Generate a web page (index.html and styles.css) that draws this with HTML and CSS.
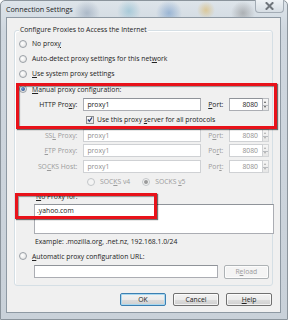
FILE: index.html
```html
<!DOCTYPE html>
<html lang="en">
  <head>
    <meta charset="UTF-8" />
    <title>Connection Settings</title>
    <link rel="stylesheet" href="styles.css">
  </head>
  <body>
    <div class="window">
      <!-- TITLE BAR -->
      <div class="titlebar">
        <span class="title">Connection Settings</span>
        <span class="close-btn">
          <svg width="9" height="8" viewBox="0 0 9 8">
            <path d="M1.5 1 L7.5 7 M7.5 1 L1.5 7" stroke="#6f757b" stroke-width="2" stroke-linecap="square"/>
          </svg>
        </span>
      </div>

      <!-- CLIENT AREA -->
      <div class="client">
        <div class="group">
          <div class="group-title">Configure Proxies to Access the Internet</div>

          <div class="row opt first"><span class="radio"></span><span>No prox<u>y</u></span></div>
          <div class="row opt"><span class="radio"></span><span>Auto-detect proxy settings for this net<u>w</u>ork</span></div>
          <div class="row opt"><span class="radio"></span><span><u>U</u>se system proxy settings</span></div>
          <div class="row opt tall"><span class="radio on"></span><span><u>M</u>anual proxy configuration:</span></div>

          <div class="row proxy">
            <span class="lbl">HTTP Pro<u>x</u>y:</span>
            <span class="field">proxy1</span>
            <span class="port-lbl"><u>P</u>ort:</span>
            <span class="port"><span class="num">8080</span><span class="spin"></span></span>
          </div>
          <div class="row check-row">
            <span class="check">
              <svg width="7" height="7" viewBox="0 0 7 7"><path d="M1 3.5 L2.8 5.5 L6 1" fill="none" stroke="#33457a" stroke-width="1.4"/></svg>
            </span>
            <span>Use this proxy <u>s</u>erver for all protocols</span>
          </div>
          <div class="row proxy off tall">
            <span class="lbl">SS<u>L</u> Proxy:</span>
            <span class="field">proxy1</span>
            <span class="port-lbl">P<u>o</u>rt:</span>
            <span class="port"><span class="num">8080</span><span class="spin"></span></span>
          </div>
          <div class="row proxy off">
            <span class="lbl"><u>F</u>TP Proxy:</span>
            <span class="field">proxy1</span>
            <span class="port-lbl">Po<u>r</u>t:</span>
            <span class="port"><span class="num">8080</span><span class="spin"></span></span>
          </div>
          <div class="row proxy off tall">
            <span class="lbl">SO<u>C</u>KS Host:</span>
            <span class="field">proxy1</span>
            <span class="port-lbl">Por<u>t</u>:</span>
            <span class="port"><span class="num">8080</span><span class="spin"></span></span>
          </div>
          <div class="row socks off">
            <span class="radio"></span><span>SOC<u>K</u>S v4</span>
            <span class="radio on v5"></span><span>SOCKS <u>v</u>5</span>
          </div>

          <div class="row noproxy-lbl"><span><u>N</u>o Proxy for:</span></div>
          <div class="area">.yahoo.com</div>
          <div class="row example">Example: .mozilla.org, .net.nz, 192.168.1.0/24</div>
          <div class="row opt tall"><span class="radio"></span><span><u>A</u>utomatic proxy configuration URL:</span></div>
          <div class="row url-row">
            <span class="url-field"></span>
            <span class="btn disabled"><span>R<u>e</u>load</span></span>
          </div>
        </div>

        <div class="buttons">
          <span class="btn default">OK</span>
          <span class="btn">Cancel</span>
          <span class="btn"><span><u>H</u>elp</span></span>
        </div>
      </div>

      <!-- red highlight marks drawn over the dialog -->
      <div class="mark mark-manual"></div>
      <div class="mark mark-noproxy"></div>
    </div>
  </body>
</html>
```

FILE: styles.css
```css
/* RESET */
* {
  margin: 0;
  padding: 0;
  box-sizing: border-box;
}

body {
  background: #ffffff;
  font-family: "Open Sans", "Noto Sans", sans-serif;
  font-size: 6.8px;
  color: #222222;
}

/* WINDOW FRAME (Aero glass look) */
.window {
  position: relative;
  width: 288px;
  height: 320px;
  padding: 0 6px 7px 5px;
  border: 1px solid #8b949c;
  border-radius: 5px 5px 0 0;
  background:
    radial-gradient(circle at 86px 12px, rgba(120, 140, 165, 0.45) 0, rgba(120, 140, 165, 0) 13px),
    radial-gradient(circle at 128px 10px, rgba(110, 175, 200, 0.45) 0, rgba(110, 175, 200, 0) 12px),
    radial-gradient(circle at 168px 12px, rgba(80, 130, 190, 0.45) 0, rgba(80, 130, 190, 0) 13px),
    radial-gradient(circle at 205px 9px, rgba(220, 180, 90, 0.55) 0, rgba(220, 180, 90, 0) 9px),
    radial-gradient(circle at 242px 12px, rgba(120, 120, 120, 0.45) 0, rgba(120, 120, 120, 0) 12px),
    linear-gradient(#dde4ea, #cfd7df 30px, #c9d1d9);
}

.titlebar {
  position: relative;
  height: 16px;
  display: flex;
  align-items: center;
}
.title {
  font-size: 7.2px;
  color: #1b1b1b;
  margin-top: -1px;
}
.close-btn {
  position: absolute;
  top: -1px;
  right: -3px;
  width: 29px;
  height: 13px;
  border: 1px solid #a3acb5;
  border-top: none;
  border-radius: 0 0 4px 4px;
  background: linear-gradient(#eef2f5, #d6dde3);
  display: flex;
  align-items: center;
  justify-content: center;
}

/* CLIENT AREA */
.client {
  height: 296px;
  background: #f0f0f0;
  border: 1px solid #8e99a3;
  padding: 8px 7px 0 7px;
}

/* GROUP BOX */
.group {
  margin-top: 4px;
  height: 256px;
  border: 1px solid #d5dfe5;
  border-radius: 3px;
  box-shadow: inset 1px 1px 0 #fff;
  padding: 0 3px 0 3px;
}
.group-title {
  display: table;
  margin: -6px 0 0 1px;
  padding: 0 1px;
  height: 10px;
  line-height: 10px;
  background: #f0f0f0;
}

/* ROWS */
.row {
  display: flex;
  align-items: center;
  height: 15px;
  white-space: nowrap;
}
.row.tall {
  height: 16px;
}
.row.first {
  margin-top: 1px;
}
.opt {
  padding-left: 1px;
}
.off {
  color: #9b9b9b;
}

/* RADIO & CHECKBOX */
.radio {
  width: 8px;
  height: 8px;
  border-radius: 50%;
  border: 1px solid #9aa0a6;
  background: radial-gradient(circle at 40% 40%, #ffffff, #dcdcdc);
  margin-right: 5px;
  flex: none;
  position: relative;
}
.radio.on::after {
  content: "";
  position: absolute;
  left: 1px;
  top: 1px;
  width: 4px;
  height: 4px;
  border-radius: 50%;
  background: radial-gradient(circle at 35% 35%, #6f9ad6, #1d3f7a);
}
.off .radio {
  border-color: #c3c6c9;
  background: #f4f4f4;
}
.off .radio.on::after {
  background: #9a9a9a;
}
.check {
  width: 8px;
  height: 8px;
  border: 1px solid #8e8f8f;
  background: linear-gradient(#fdfdfd, #e2e2e2);
  margin: 0 3px 0 68px;
  display: flex;
  align-items: center;
  justify-content: center;
  flex: none;
}

/* PROXY ROWS */
.lbl {
  width: 60px;
  text-align: right;
  margin-right: 6px;
}
.field {
  width: 119px;
  height: 13px;
  line-height: 12px;
  border: 1px solid #abadb3;
  border-top-color: #8f9399;
  background: #fff;
  padding-left: 3px;
}
.port-lbl {
  width: 21px;
  margin-left: 7px;
}
.port {
  display: flex;
  height: 13px;
}
.port .num {
  width: 34px;
  height: 13px;
  line-height: 12px;
  border: 1px solid #abadb3;
  border-top-color: #8f9399;
  background: #fff;
  text-align: right;
  padding-right: 4px;
}
.spin {
  width: 6px;
  height: 13px;
  border: 1px solid #b9bcc0;
  border-left: none;
  background:
    linear-gradient(#b9bcc0, #b9bcc0) 0 6px / 100% 1px no-repeat,
    linear-gradient(#f6f6f6, #e6e6e6);
  position: relative;
}
.spin::before,
.spin::after {
  content: "";
  position: absolute;
  left: 1px;
  border-left: 1.5px solid transparent;
  border-right: 1.5px solid transparent;
}
.spin::before {
  top: 2px;
  border-bottom: 2px solid #555;
}
.spin::after {
  bottom: 2px;
  border-top: 2px solid #555;
}
.off .field,
.off .num {
  border-color: #cfd1d4;
  color: #8f8f8f;
}
.off .spin {
  border-color: #d4d6d8;
}
.off .spin::before {
  border-bottom-color: #a8a8a8;
}
.off .spin::after {
  border-top-color: #a8a8a8;
}

/* SOCKS VERSION */
.socks {
  padding-left: 69px;
}
.socks .v5 {
  margin-left: 12px;
}

/* NO PROXY FOR */
.noproxy-lbl {
  height: 14px;
  padding-left: 18px;
}
.area {
  margin: 1px 0 0 16px;
  width: 240px;
  height: 30px;
  border: 1px solid #abadb3;
  border-top-color: #8f9399;
  background: #fff;
  padding: 1px 2px;
  line-height: 9px;
}
.example {
  height: 14px;
  padding-left: 17px;
}

/* URL ROW */
.url-row {
  padding-left: 16px;
}
.url-field {
  width: 186px;
  height: 13px;
  border: 1px solid #abadb3;
  border-top-color: #8f9399;
  background: #fff;
  margin-right: 6px;
}

/* BUTTONS */
.btn {
  width: 46px;
  height: 13px;
  display: flex;
  align-items: center;
  justify-content: center;
  border: 1px solid #707070;
  border-radius: 2px;
  background: linear-gradient(#f2f2f2 0, #ebebeb 50%, #dddddd 51%, #cfcfcf);
  box-shadow: inset 0 0 0 1px rgba(255, 255, 255, 0.7);
}
.btn.disabled {
  border-color: #adb2b5;
  background: #f4f4f4;
  color: #9b9b9b;
  height: 14px;
}
.btn.default {
  border-color: #3c7fb1;
  box-shadow: inset 0 0 0 1px #a8d8f0;
}
.buttons {
  display: flex;
  justify-content: flex-end;
  gap: 7px;
  margin-top: 7px;
  padding-right: 1px;
}

/* RED HIGHLIGHTS */
.mark {
  position: absolute;
  border: 3px solid #e8121a;
  box-shadow: 1px 1px 1px rgba(0, 0, 0, 0.55), inset 1px 1px 1px rgba(0, 0, 0, 0.4);
}
.mark-manual {
  left: 15px;
  top: 82px;
  width: 261px;
  height: 46px;
}
.mark-noproxy {
  left: 14px;
  top: 192px;
  width: 142px;
  height: 26px;
}
```
